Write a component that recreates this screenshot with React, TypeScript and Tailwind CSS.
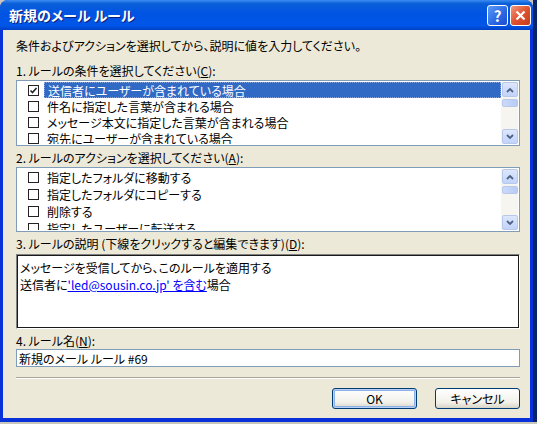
import React from "react";

const font = { fontFamily: '"Noto Sans CJK JP", "Liberation Sans", sans-serif' };

function CheckBox({ checked }: { checked?: boolean }) {
  return (
    <span className="flex h-[11px] w-[11px] shrink-0 items-center justify-center border border-[#222] bg-white">
      {checked && (
        <svg width="9" height="9" viewBox="0 0 9 9">
          <path d="M1.5 4.5 L3.5 6.5 L7.5 2" stroke="#222" strokeWidth="1.6" fill="none" />
        </svg>
      )}
    </span>
  );
}

function ScrollButton({ dir }: { dir: "up" | "down" }) {
  return (
    <div className="flex h-[15px] w-[16px] items-center justify-center rounded-[2px] border border-[#b8c8ea] bg-[linear-gradient(to_bottom,#dde7fc,#c2d3fa)]">
      <svg width="8" height="6" viewBox="0 0 8 6">
        <path
          d={dir === "up" ? "M1 5 L4 2 L7 5" : "M1 1 L4 4 L7 1"}
          stroke="#4d6185"
          strokeWidth="1.8"
          fill="none"
        />
      </svg>
    </div>
  );
}

function ScrollBar() {
  return (
    <div className="flex w-[17px] flex-col bg-[#f6f5ef] pl-px">
      <ScrollButton dir="up" />
      <div className="mt-[2px] h-[8px] w-[16px] rounded-[2px] border border-[#b8c8ea] bg-[linear-gradient(to_right,#cbdafb,#b9cbf5)]" />
      <div className="flex-1" />
      <ScrollButton dir="down" />
    </div>
  );
}

function ListBox({
  items,
  rowH,
  height,
  selected,
}: {
  items: string[];
  rowH: string;
  height: string;
  selected?: number;
}) {
  return (
    <div className={`flex ${height} overflow-hidden border border-[#7f9db9] bg-white p-px`}>
      <div className="flex-1 overflow-hidden">
        {items.map((t, i) => (
          <div key={t} className={`flex ${rowH} items-center`}>
            <div className="flex w-[23px] justify-end pr-[2px]">
              <CheckBox checked={i === selected} />
            </div>
            <div
              className={`ml-[3px] flex h-full flex-1 items-center pl-[3px] ${
                i === selected ? "border border-dotted border-[#8aa8e0] bg-[#316ac5] text-white" : "text-black"
              }`}
            >
              {t}
            </div>
          </div>
        ))}
      </div>
      <ScrollBar />
    </div>
  );
}

function XPButton({ label, focused }: { label: string; focused?: boolean }) {
  return (
    <button
      className={`flex h-[21px] w-[85px] items-center justify-center rounded-[3px] border border-[#003c74] bg-[linear-gradient(to_bottom,#ffffff,#f2f1ea_70%,#d8d5c6)] text-[12px] text-black ${
        focused ? "shadow-[inset_0_0_0_1px_#b7d1f5,inset_0_0_0_2px_#8fb1ea]" : ""
      }`}
    >
      {label}
    </button>
  );
}

export default function App() {
  return (
    <div
      className="h-[424px] w-[537px] overflow-hidden bg-[#c9c7bd] text-[12px] leading-[15px] text-black [font-feature-settings:'palt']"
      style={font}
    >
      <div className="flex h-[422px]">
        <div className="flex w-[533px] flex-col overflow-hidden rounded-t-[8px] bg-[#0831d9]">
          {/* title bar */}
          <div className="flex h-[30px] shrink-0 items-center bg-[linear-gradient(to_bottom,#3c8cf3_0%,#0a5fd8_12%,#0054e3_45%,#0056e8_85%,#0040c4_100%)] pl-[9px] pr-[2px]">
            <span className="flex-1 text-[14px] font-bold text-white [text-shadow:1px_1px_0_#0a1f7a]">
              新規のメール ルール
            </span>
            <div className="flex gap-[2px]">
              <div className="flex h-[21px] w-[21px] items-center justify-center rounded-[3px] border border-white bg-[linear-gradient(135deg,#5c9bf7,#2a66e2_60%,#1a4fd0)] text-[15px] font-bold leading-none text-white">
                ?
              </div>
              <div className="flex h-[21px] w-[21px] items-center justify-center rounded-[3px] border border-white bg-[linear-gradient(135deg,#f09a7e,#e0532f_50%,#c53a1c)]">
                <svg width="11" height="11" viewBox="0 0 11 11">
                  <path d="M1.5 1.5 L9.5 9.5 M9.5 1.5 L1.5 9.5" stroke="white" strokeWidth="2.2" />
                </svg>
              </div>
            </div>
          </div>
          {/* client */}
          <div className="mx-[3px] mb-[4px] flex flex-1 flex-col bg-[#ece9d8] pl-[13px] pr-[10px]">
            <div className="mt-[8px] h-[15px]">条件およびアクションを選択してから、説明に値を入力してください。</div>

            <div className="mt-[10px] h-[15px]">
              1. ルールの条件を選択してください(<span className="underline">C</span>):
            </div>
            <div className="mt-[2px]">
              <ListBox
                height="h-[66px]"
                rowH="h-[16px]"
                selected={0}
                items={[
                  "送信者にユーザーが含まれている場合",
                  "件名に指定した言葉が含まれる場合",
                  "メッセージ本文に指定した言葉が含まれる場合",
                  "宛先にユーザーが含まれている場合",
                ]}
              />
            </div>

            <div className="mt-[4px] h-[15px]">
              2. ルールのアクションを選択してください(<span className="underline">A</span>):
            </div>
            <div className="mt-[2px]">
              <ListBox
                height="h-[65px]"
                rowH="h-[17px]"
                items={[
                  "指定したフォルダに移動する",
                  "指定したフォルダにコピーする",
                  "削除する",
                  "指定したユーザーに転送する",
                ]}
              />
            </div>

            <div className="mt-[4px] h-[15px]">
              3. ルールの説明 (下線をクリックすると編集できます)(<span className="underline">D</span>):
            </div>
            <div className="mt-[3px] h-[75px] border border-[#808080] border-b-white border-r-white">
              <div className="h-full border border-[#1a1a1a] bg-white pl-[2px] pt-[3px] leading-[17px]">
                <div>メッセージを受信してから、このルールを適用する</div>
                <div>
                  送信者に
                  <span className="text-[#0000ff] underline">'led@sousin.co.jp' を含む</span>
                  場合
                </div>
              </div>
            </div>

            <div className="mt-[4px] h-[15px]">
              4. ルール名(<span className="underline">N</span>):
            </div>
            <div className="mt-px flex h-[18px] items-center border border-[#7f9db9] bg-white pl-[2px]">
              新規のメール ルール #69
            </div>

            <div className="mt-[10px] border-t border-b border-t-[#aca899] border-b-white" />

            <div className="mt-[9px] flex justify-end gap-[18px]">
              <XPButton label="OK" focused />
              <XPButton label="キャンセル" />
            </div>
          </div>
        </div>
        <div className="flex-1 bg-[#0a246a]" />
      </div>
    </div>
  );
}
